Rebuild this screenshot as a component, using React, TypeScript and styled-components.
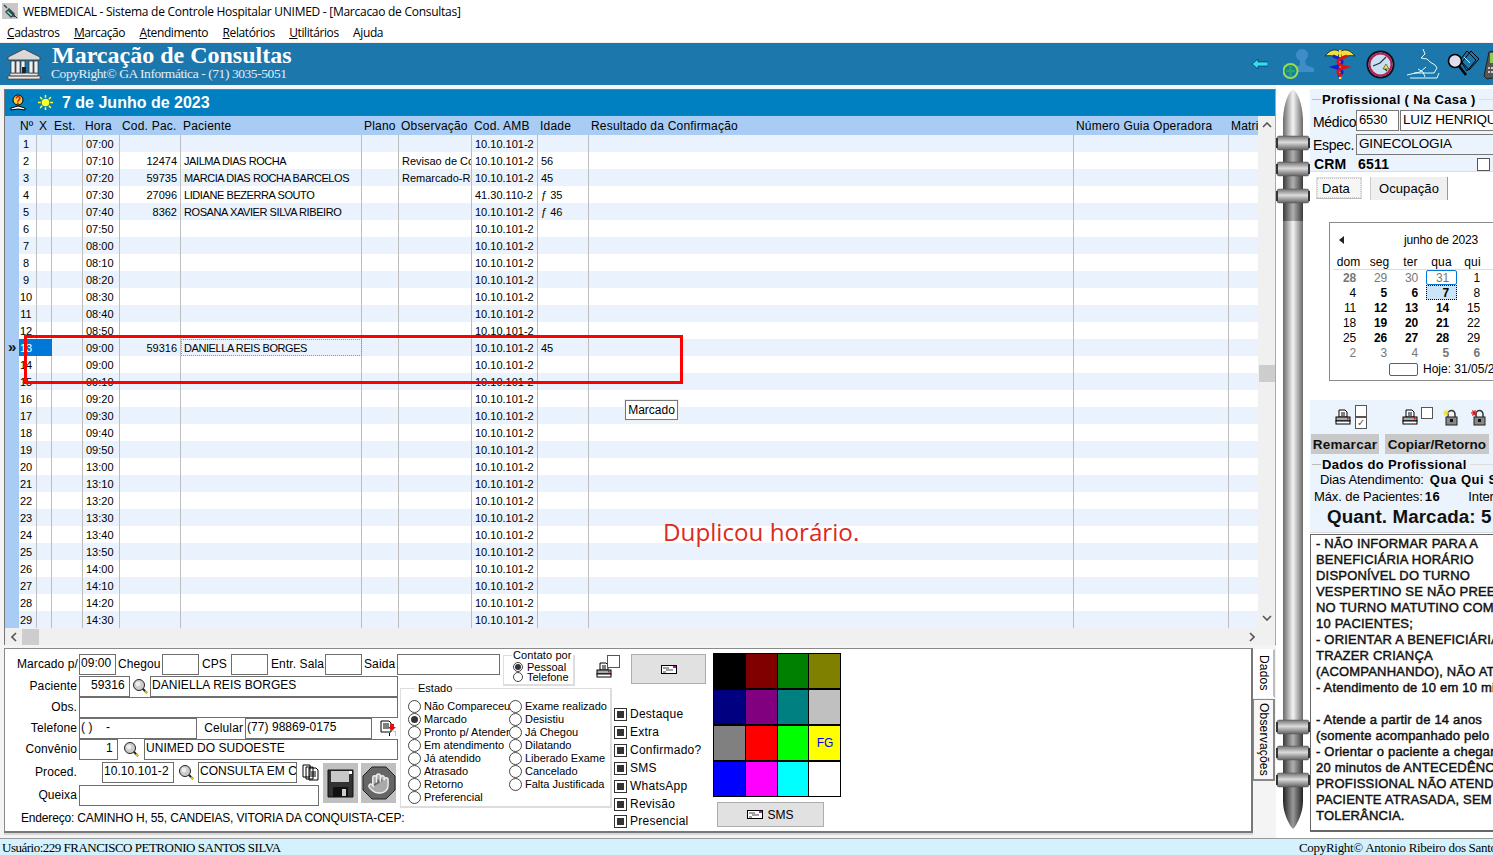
import React from 'react';
import styled, { createGlobalStyle } from 'styled-components';
import { Hand } from 'lucide-react';

const Global = createGlobalStyle`
  html, body { margin: 0; padding: 0; background: #fff; overflow: hidden; }
  * { box-sizing: border-box; }
`;

const UI = `"Liberation Sans", Arial, sans-serif`;
const HEAD = '#a8ccf3';
const LIGHT = '#ebf3fd';

const Root = styled.div`
  position: relative; width: 1493px; height: 855px; overflow: hidden; background: #fff;
  display: flex; flex-direction: column; font-family: ${UI}; font-size: 12px; color: #000;
`;
const TitleBar = styled.div`
  height: 22px; display: flex; align-items: center; gap: 5px; padding-left: 2px;
  font: 12px "Open Sans", sans-serif; letter-spacing: -0.27px; background: #fff; flex: none;
`;
const MenuBar = styled.div`
  height: 21px; display: flex; align-items: center; padding-left: 7px; gap: 14.4px; flex: none;
  font: 12px "Open Sans", sans-serif; letter-spacing: -0.4px; border-bottom: 1px solid #f0f0f0;
`;
const Banner = styled.div`
  height: 42px; background: #1c77ad; flex: none; display: flex; align-items: flex-start; padding-left: 7px; position: relative;
`;
const BannerText = styled.div`
  margin-left: 11px; display: flex; flex-direction: column; font-family: "Liberation Serif", serif; color: #fff;
`;
const BannerTitle = styled.div`font-size: 24px; font-weight: 700; line-height: 25px; white-space: nowrap;`;
const BannerSub = styled.div`font-size: 13.5px; line-height: 12px; color: #e4eef5; white-space: nowrap; letter-spacing: -0.43px; margin-left: -1px;`;
const BannerIcons = styled.div`
  margin-left: auto; display: flex; align-items: center; width: 243px; height: 42px; flex: none;
  svg { flex: none; }
`;
const BI = styled.div<{ $ml: number }>`margin-left: ${p => p.$ml}px; flex: none; display: flex;`;
const Body = styled.div`flex: 1; display: flex; min-height: 0; background: #fff;`;
const LeftCol = styled.div`
  width: 1276px; flex: none; padding: 4px 0 0 4px; display: flex; flex-direction: column; background: #f4f4f4;
`;
const GridPanel = styled.div`
  height: 556px; border-top: 1px solid #777; border-left: 1px solid #777; border-right: 1px solid #aaa; border-bottom: 1px solid #777;
  display: flex; flex-direction: column; flex: none; background: #f0f0f0;
`;
const DateBar = styled.div`
  height: 26px; background: #0080c0; display: flex; align-items: center; color: #fff; font: 700 16px ${UI}; flex: none;
  padding-left: 5px; gap: 8px; border-bottom: 1px solid #666;
`;
const GridWrap = styled.div`display: flex; height: 512px; flex: none;`;
const Table = styled.div`width: 1253px; flex: none; padding-left: 2px; overflow: hidden; background: ${HEAD};`;
const cols = '12px 18px 15px 31px 37px 61px 181px 37px 73px 66px 51px 485px 155px 30px';
const HeadRow = styled.div`
  display: grid; grid-template-columns: ${cols}; height: 19px; background: ${HEAD}; font: 12px/21px ${UI}; letter-spacing: 0.2px;
`;
const HeadCell = styled.div<{ $pad?: number }>`
  padding-left: ${p => p.$pad ?? 2}px; white-space: nowrap; overflow: hidden;
`;
const Row = styled.div<{ $odd: boolean }>`
  display: grid; grid-template-columns: ${cols}; height: 17px; font: 11px/19px ${UI};
  background: ${p => (p.$odd ? '#eaf2fd' : '#fff')};
`;
const Indicator = styled.div`background: ${HEAD}; margin-left: -1px; font: 700 15px/15px ${UI}; padding-left: 2px; color: #111;`;
const Cell = styled.div<{ $right?: boolean; $center?: boolean; $sel?: boolean; $focus?: boolean; $tight?: boolean }>`
  border-right: 1px solid #bdbdbd; white-space: nowrap; overflow: hidden; padding: 0 3px 0 ${p => (p.$center ? 0 : 3)}px;
  text-align: ${p => (p.$right ? 'right' : p.$center ? 'center' : 'left')};
  ${p => p.$sel && 'background:#0078d7;color:#fff;border-right-color:#0078d7;'}
  ${p => p.$focus && 'outline:1px dotted #c98a3a;outline-offset:-1px;'}
  ${p => p.$tight && 'letter-spacing:-0.42px;'}
`;
const VScroll = styled.div`
  width: 17px; flex: none; background: #f0f0f0; display: flex; flex-direction: column; align-items: center; justify-content: space-between;
  position: relative; color: #555; font-size: 9px;
`;
const Thumb = styled.div`width: 16px; height: 17px; background: #cdcdcd;`;
const VSpacer = styled.div<{ $h: number }>`height: ${p => p.$h}px; flex: none;`;
const HScroll = styled.div`height: 17px; display: flex; align-items: center; background: #f0f0f0; padding: 0 20px 0 6px; flex: none;`;
const HThumb = styled.div`width: 17px; height: 16px; background: #cdcdcd; margin-left: 5px; margin-right: auto;`;

const FormArea = styled.div`flex: 1; display: flex; padding-top: 3px; min-height: 0; background: #f4f4f4;`;
const FormBox = styled.div`
  width: 1249px; height: 185px; flex: none; background: #fff; border: 1px solid #8a8a8a; border-right: 2px solid #777; border-bottom: 2px solid #777;
  display: flex; padding: 5px 0 0 12px; box-shadow: 0 2px 0 #d8d8d8;
`;
const VTabs = styled.div`display: flex; flex-direction: column; flex: none; width: 22px; padding-top: 1px;`;
const VTab = styled.div<{ $h: number; $active?: boolean }>`
  height: ${p => p.$h}px; width: 22px; writing-mode: vertical-rl; display: flex; align-items: center; justify-content: center;
  font: 12px ${UI}; background: ${p => (p.$active ? '#fff' : '#f7f7f7')}; letter-spacing: .2px;
  border-right: 2px solid ${p => (p.$active ? '#bbb' : '#888')}; border-bottom: 2px solid ${p => (p.$active ? '#fff' : '#888')};
  border-left: 1px solid ${p => (p.$active ? 'transparent' : '#888')}; border-top: 1px solid ${p => (p.$active ? 'transparent' : '#888')};
  margin-bottom: 1px;
`;
const ColA = styled.div`width: 383px; flex: none; display: flex; flex-direction: column;`;
const FormRow = styled.div<{ $h?: number }>`
  display: flex; align-items: stretch; height: ${p => p.$h ?? 21}px; flex: none; white-space: nowrap;
`;
const Label = styled.div<{ $w: number }>`
  width: ${p => p.$w}px; text-align: right; flex: none; font: 12px/21px ${UI}; letter-spacing: .1px; white-space: nowrap;
`;
const InlineLabel = styled.div<{ $w: number; $ml: number }>`
  width: ${p => p.$w}px; margin-left: ${p => p.$ml}px; flex: none; font: 12px/21px ${UI}; letter-spacing: .1px; white-space: nowrap;
`;
const Field = styled.div<{ $w: number; $ml?: number; $right?: boolean }>`
  width: ${p => p.$w}px; margin-left: ${p => p.$ml ?? 2}px; flex: none; height: 21px; background: #fff;
  border: 1px solid #6e6e6e; font: 12px/17px ${UI}; padding: 0 1px; overflow: hidden; white-space: nowrap;
  text-align: ${p => (p.$right ? 'right' : 'left')}; letter-spacing: 0.05px;
`;
const IconSlot = styled.div<{ $w: number }>`width: ${p => p.$w}px; flex: none; display: flex; align-items: center; justify-content: center;`;
const ProcedZone = styled.div`display: flex; margin-top: 2px; height: 44px; flex: none;`;
const ProcedLeft = styled.div`display: flex; flex-direction: column; gap: 2px; width: 306px; flex: none;`;
const ProcedButtons = styled.div`display: flex; gap: 3px; margin-top: 1px; height: 40px; margin-left: 0;`;
const IconButton = styled.div`width: 35px; height: 40px; background: #c0c0c0; display: flex; align-items: center; justify-content: center; flex: none; position: relative;`;
const Address = styled.div`font: 12px ${UI}; margin: 5px 0 0 4px; white-space: nowrap; letter-spacing: -0.17px;`;

const ColB = styled.div`width: 213px; flex: none; display: flex; flex-direction: column;`;
const TopLine = styled.div`display: flex; height: 29px; flex: none;`;
const ContactBox = styled.fieldset`
  margin: -3px 0 0 103px; width: 71px; height: 35px; padding: 0 0 0 9px; border: 1px solid #ddd; border-width: 1px 2px 2px 1px; font: 11px/10px ${UI}; flex: none;
  legend { padding: 0 1px; margin-left: -1px; line-height: 9px; height: 9px; white-space: nowrap; letter-spacing: 0.1px; }
`;
const ContactRows = styled.div`display: flex; flex-direction: column; margin-top: 2px;`;
const ContactRow = styled.div`display: flex; align-items: center; gap: 4px; height: 10px;`;
const PrinterSlot = styled.div`
  position: relative; margin-left: 21px; margin-top: 1px; width: 24px; height: 23px; display: flex; align-items: flex-end; flex: none;
`;
const SmallBox = styled.div`position: absolute; right: 0; top: 0; width: 13px; height: 13px; background: #fff; border: 1px solid #555;`;
const EstadoBox = styled.fieldset`
  margin: 0; width: 212px; height: 125px; padding: 0 0 0 7px; border: 1px solid #ddd; border-width: 1px 2px 2px 1px;
  font: 11px/13px ${UI}; letter-spacing: 0; display: grid; grid-template-columns: 101px 1fr; flex: none;
  legend { margin-left: 7px; padding: 0 3px; font-size: 11px; line-height: 11px; }
`;
const RadioCol = styled.div`display: flex; flex-direction: column; margin-top: 6px; min-width: 0;`;
const RadioRow = styled.div`display: flex; align-items: center; gap: 3px; height: 13px; white-space: nowrap;`;
const Radio = styled.span<{ $on?: boolean; $size?: number }>`
  width: ${p => p.$size ?? 13}px; height: ${p => p.$size ?? 13}px; border-radius: 50%; border: 1px solid #444; flex: none; background: #fff;
  display: inline-flex; align-items: center; justify-content: center; position: relative;
  &::after { content: ''; width: ${p => (p.$size ? 6 : 7)}px; height: ${p => (p.$size ? 6 : 7)}px; border-radius: 50%; background: ${p => (p.$on ? '#333' : 'transparent')}; }
`;
const ColC = styled.div`width: 99px; flex: none; display: flex; flex-direction: column; margin-left: 1px;`;
const GrayBtn = styled.div<{ $w: number; $h: number; $ml: number }>`
  width: ${p => p.$w}px; height: ${p => p.$h}px; margin-left: ${p => p.$ml}px; background: #e1e1e1; border: 1px solid #adadad; flex: none;
  display: flex; align-items: center; justify-content: center; gap: 4px; font: 12px ${UI};
`;
const Checks = styled.div`display: flex; flex-direction: column; margin-top: 21px;`;
const CheckRow = styled.div`
  display: flex; align-items: center; gap: 3px; height: 18px; font: 12px ${UI}; letter-spacing: .25px; white-space: nowrap;
  &:last-child { margin-top: -1px; }
`;
const CheckBox = styled.span`
  width: 13px; height: 13px; border: 1px solid #333; background: #fff; flex: none; display: flex; align-items: center; justify-content: center;
  &::after { content: ''; width: 7px; height: 7px; background: #333; }
`;
const ColD = styled.div`width: 128px; flex: none; display: flex; flex-direction: column; gap: 5px; margin-top: -1px;`;
const Palette = styled.div`
  display: grid; grid-template-columns: repeat(4, 1fr); grid-auto-rows: 34px; gap: 2px 1px; background: #000; border: 1px solid #000; width: 128px; height: 144px; flex: none;
`;
const Swatch = styled.div<{ $c: string }>`
  background: ${p => p.$c}; color: #00f; font: 12px ${UI}; display: flex; align-items: center; justify-content: center; padding-left: 1px;
`;

const SpineZone = styled.div`width: 34px; flex: none; padding-top: 4px; background: #fff;`;
const Right = styled.div`width: 320px; flex: none; padding-top: 4px; display: flex; flex-direction: column; background: #fff;`;
const ProfBox = styled.div`height: 83px; background: ${LIGHT}; flex: none; display: flex; flex-direction: column; border-bottom: 1px solid #ddd;`;
const GroupTitle = styled.div<{ $h: number }>`
  display: flex; align-items: center; height: ${p => p.$h}px; font: 700 13px ${UI}; letter-spacing: .35px; white-space: nowrap; padding-left: 2px; flex: none;
  &::before { content: ''; width: 9px; height: 1px; background: #bbb; margin-right: 1px; flex: none; }
  &::after { content: ''; flex: 1; height: 1px; background: #ddd; margin-left: 3px; }
`;
const ProfRow = styled.div<{ $h: number }>`display: flex; align-items: center; height: ${p => p.$h}px; flex: none; white-space: nowrap;`;
const ProfLabel = styled.div<{ $pt?: number }>`width: 46px; padding: ${p => p.$pt ?? 0}px 0 0 3px; font: 14px ${UI}; flex: none; letter-spacing: -0.3px;`;
const ProfInput = styled.div<{ $w: number; $bg?: string; $size?: number }>`
  width: ${p => p.$w}px; height: 21px; margin-right: 1px; background: ${p => p.$bg ?? '#fff'}; border: 1px solid #777; font: ${p => p.$size ?? 13.5}px/18px ${UI}; letter-spacing: -0.15px; padding-left: 2px; flex: none; overflow: hidden;
`;
const Crm = styled.div<{ $w?: number; $ml: number }>`font: 700 14px ${UI}; ${p => p.$w && `width:${p.$w}px;`} margin-left: ${p => p.$ml}px; flex: none; letter-spacing: .2px;`;
const Check = styled.div`width: 13px; height: 13px; background: #fff; border: 1px solid #555; flex: none;`;
const TabsRow = styled.div`height: 28px; display: flex; padding: 5px 0 0 6px; flex: none; font: 13px ${UI}; letter-spacing: .1px;`;
const DataTab = styled.div`
  width: 46px; height: 22px; background: #f6f6f6; border: 1px solid #ddd; border-bottom: 1px solid #bbb; display: flex; align-items: center; justify-content: center; padding-right: 6px;
  outline: 1px dotted #ccc; outline-offset: -2px;
`;
const OcuTab = styled.div`
  width: 78px; height: 23px; margin-left: 8px; background: #f0f0f0; border-left: 1px solid #ccc; border-right: 1px solid #999; display: flex; align-items: center; justify-content: center;
`;
const CalZone = styled.div`height: 200px; flex: none; padding: 22px 0 0 19px; background: #fff;`;
const Calendar = styled.div`
  width: 300px; height: 159px; border: 1px solid #8a8a8a; padding: 6px 0 0 3px; font: 12px ${UI};
`;
const CalHead = styled.div`display: flex; align-items: center; height: 26px; padding: 0 0 4px 6px; font-size: 12px; letter-spacing: -0.15px;`;
const CalTitle = styled.div`margin-left: 60px;`;
const CalGrid = styled.div`display: grid; grid-template-columns: repeat(7, 31px); grid-auto-rows: 15px;`;
const DayName = styled.div`grid-row: 1; height: 15px; text-align: center; font-size: 12px; letter-spacing: .1px; border-bottom: 1px solid #ddd;`;
const Day = styled.div<{ $b?: boolean; $g?: boolean; $today?: boolean; $sel?: boolean }>`
  text-align: right; padding-right: 8px; font-size: 12px; line-height: 17px; letter-spacing: -0.2px; overflow: visible;
  font-weight: ${p => (p.$b ? 700 : 400)}; color: ${p => (p.$g ? '#777' : '#000')};
  ${p => p.$today && 'border:1px solid #0078d7;border-radius:2px;padding-right:7px;line-height:15px;'}
  ${p => p.$sel && 'background:#cce4f7;outline:1px dotted #000;outline-offset:-1px;'}
`;
const HojeRow = styled.div`display: flex; align-items: center; gap: 5px; padding-left: 56px; margin-top: 2px; font-size: 12px; white-space: nowrap;`;
const HojeBox = styled.div`width: 29px; height: 13px; border: 1px solid #0078d7; border-radius: 2px;`;
const Tools = styled.div`
  height: 32px; background: ${LIGHT}; flex: none; display: flex; align-items: center; padding: 2px 0 0 25px;
`;
const CheckStack = styled.div`display: flex; flex-direction: column; margin-left: 4px; width: 12px;`;
const StackBox = styled.div`width: 12px; height: 12px; background: #fff; border: 1px solid #555; font: 10px/10px ${UI}; text-align: center; color: #555;`;
const ToolBox = styled.div`width: 12px; height: 12px; background: #fff; border: 1px solid #555; margin: -9px 0 0 3px; flex: none;`;
const Btns = styled.div`display: flex; height: 24px; flex: none; gap: 6px; padding: 2px 0 0 1px; background: ${LIGHT};`;
const BoldBtn = styled.div<{ $w: number; $ls: number }>`
  width: ${p => p.$w}px; height: 20px; background: #c8c8c8; font: 700 13.5px/21px ${UI}; letter-spacing: ${p => p.$ls}px; text-align: center; flex: none; white-space: nowrap; color: #111;
`;
const DadosBox = styled.div`height: 77px; background: ${LIGHT}; flex: none; display: flex; flex-direction: column; border-bottom: 1px solid #ddd;`;
const DadosLine = styled.div<{ $pl: number; $h: number }>`padding-left: ${p => p.$pl}px; height: ${p => p.$h}px; display: flex; align-items: center; font: 13px ${UI}; white-space: nowrap; flex: none; letter-spacing: -0.1px;`;
const B = styled.b<{ $ml?: number }>`font: 700 13px ${UI}; letter-spacing: .55px; margin: 1px 0 0 ${p => p.$ml ?? 2}px;`;
const Inter = styled.span`margin-left: 28px;`;
const Quant = styled.div`font: 700 18.8px ${UI}; padding-left: 17px; line-height: 20px; white-space: nowrap; letter-spacing: .1px; color: #111;`;
const Memo = styled.div`
  flex: none; height: 298px; margin-top: 1px; border: 1px solid #666; border-bottom: 2px solid #666; background: #fff; padding: 1px 0 0 5px; overflow: hidden;
  font: 13px/16px ${UI}; letter-spacing: .2px; white-space: pre; color: #111; -webkit-text-stroke: .45px #111;
`;
const StatusBar = styled.div`
  height: 17px; flex: none; background: #d4f2fd; display: flex; justify-content: space-between; font: 13px/18px "Liberation Serif", serif; padding-left: 2px; white-space: nowrap; border-top: 1px solid #999; overflow: hidden; letter-spacing: -0.5px;
`;
const StatusRight = styled.div`width: 194px; flex: none; overflow: visible; letter-spacing: -0.3px;`;

const RedBox = styled.div`position: absolute; left: 24px; top: 335px; width: 659px; height: 49px; border: 3px solid #f00; pointer-events: none;`;
const Tip = styled.div`position: absolute; left: 625px; top: 400px; width: 53px; height: 20px; background: #fff; border: 1px solid #777; font: 12px/18px ${UI}; text-align: center; box-shadow: 0 0 0 1px #eee;`;
const Note = styled.div`position: absolute; left: 663px; top: 515px; font: 24.2px "Open Sans", sans-serif; color: #dc2a1e; white-space: nowrap;`;
const HandWrap = styled.div`position: relative; width: 34px; height: 34px; display: flex; align-items: center; justify-content: center;`;
const Octagon = styled.svg`position: absolute; left: 0; top: 0;`;
const HandIcon = styled(Hand)`position: relative;`;

/* Icons */
const AppIcon = () => (
  <svg width="16" height="16" viewBox="0 0 16 16"><rect width="16" height="16" fill="#c8c8c8" /><path d="M2 2l3 3M13 14L6 7M4 9l3-3 5 5-1 2-2 1z" stroke="#345" strokeWidth="1.4" fill="#7ea" /><path d="M12 12l3 3" stroke="#333" /></svg>
);
const TempleSvg = styled.svg`margin-top: 5px; flex: none;`;
const Temple = () => (
  <TempleSvg width="34" height="32" viewBox="0 0 34 32">
    <path d="M17 1L33 9v3H1V9z" fill="#d8d8d8" stroke="#444" />
    <path d="M1 28h32v3H1zM3 25h28v3H3z" fill="#e8e8e8" stroke="#444" strokeWidth=".7" />
    {[4, 9, 14, 22, 27].map(x => <rect key={x} x={x} y="13" width="4" height="12" fill="#f0f0f0" stroke="#333" strokeWidth=".7" />)}
    <rect x="15" y="19" width="4" height="6" fill="#222" />
  </TempleSvg>
);
const QuestionBook = () => (
  <svg width="16" height="17" viewBox="0 0 16 17"><path d="M1 14l7-2 7 2v2l-7-1-7 1z" fill="#fff" stroke="#000" /><circle cx="8" cy="6" r="5" fill="#f6d040" stroke="#000" /><text x="8" y="10" fontSize="10" fontWeight="700" textAnchor="middle" fill="#d00" fontFamily="Liberation Sans">?</text></svg>
);
const SunSvg = styled.svg`margin-left: 3px; flex: none;`;
const Sun = () => (
  <SunSvg width="17" height="17" viewBox="0 0 18 18"><circle cx="9" cy="9" r="4" fill="#ffff30" />{[0, 45, 90, 135, 180, 225, 270, 315].map(a => <line key={a} x1="9" y1="1" x2="9" y2="4" stroke="#ffff30" strokeWidth="1.6" transform={`rotate(${a} 9 9)`} />)}</SunSvg>
);
const Mag = ({ s = 17 }: { s?: number }) => (
  <svg width={s} height={s} viewBox="0 0 17 17"><line x1="10" y1="10" x2="15" y2="15" stroke="#222" strokeWidth="2" /><line x1="13" y1="13" x2="15" y2="15" stroke="#dc0" strokeWidth="2" /><circle cx="7" cy="7" r="5.5" fill="#ccc" stroke="#222" /><circle cx="6" cy="6" r="2.4" fill="#eee" /></svg>
);
const Printer = ({ s = 16 }: { s?: number }) => (
  <svg width={s} height={s} viewBox="0 0 16 16"><path d="M4 1h6l2 2v5H4z" fill="#fff" stroke="#000" /><path d="M6 4h4M6 6h4" stroke="#000" /><rect x="1" y="8" width="14" height="4" fill="#aaa" stroke="#000" /><rect x="1" y="12" width="14" height="3" fill="#fff" stroke="#000" /><rect x="12" y="9" width="1.4" height="1.4" fill="#e00" /></svg>
);
const Envelope = () => (
  <svg width="16" height="9" viewBox="0 0 16 9"><rect x=".5" y=".5" width="15" height="8" fill="#fff" stroke="#000" /><path d="M2 3h6M5 5h7M2 7h3" stroke="#444" /><rect x="12" y="1" width="3" height="2" fill="#c0c" /></svg>
);
const Docs = () => (
  <svg width="17" height="17" viewBox="0 0 17 17"><path d="M1 1h7v12H1zM4 3h7v12H4zM7 4h7l2 2v10H7z" fill="#fff" stroke="#000" /><path d="M9 8h5M9 10h5M9 12h5" stroke="#000" /></svg>
);
const DocFlag = () => (
  <svg width="17" height="17" viewBox="0 0 17 17"><path d="M1 1h8l2 2v9H1z" fill="#fff" stroke="#000" /><path d="M3 4h6M3 6h6M3 8h6" stroke="#000" /><path d="M10 4h4v3h2l-4 4-4-4h2z" fill="#e01010" /><path d="M13 11h3v5h-1v-4h-2z" fill="#dd0" /><path d="M9 13h1v3H9z" fill="#000" /></svg>
);
const Floppy = () => (
  <svg width="27" height="29" viewBox="0 0 27 29"><path d="M1 1h25v27H1z" fill="#333" stroke="#111" /><rect x="4" y="2" width="18" height="11" fill="#c8c8c8" /><rect x="22" y="2" width="3" height="3" fill="#fff" /><rect x="6" y="18" width="15" height="10" fill="#111" /><rect x="15" y="20" width="4" height="7" fill="#ccc" /></svg>
);
const StopHand = () => (
  <HandWrap>
    <Octagon width="34" height="34" viewBox="0 0 34 34"><path d="M10 1h14l9 9v14l-9 9H10l-9-9V10z" fill="#666" stroke="#222" /></Octagon>
    <HandIcon size={23} color="#eee" fill="#aaa" strokeWidth={1.5} />
  </HandWrap>
);
const LockIcon = ({ c }: { c: string }) => (
  <svg width="16" height="17" viewBox="0 0 16 17"><path d="M5 8V5a3.5 3.5 0 017 0v3" fill="none" stroke="#333" strokeWidth="1.5" /><rect x="3" y="8" width="11" height="8" fill="#888" stroke="#222" /><rect x="7" y="10" width="3" height="3" fill="#111" />{[0, 60, 120].map(a => <line key={a} x1="0" y1="4" x2="6" y2="4" stroke={c} strokeWidth="1.2" transform={`rotate(${a} 3 4)`} />)}</svg>
);
const ArrowIcon = () => (
  <svg width="16" height="10" viewBox="0 0 16 10"><path d="M0 5l6-5v3h10v4H6v3z" fill="#30e0f0" stroke="#024" strokeWidth=".6" /></svg>
);
const AddUser = () => (
  <svg width="32" height="32" viewBox="0 0 32 32"><circle cx="19" cy="7" r="6" fill="#3f8cc8" /><path d="M17 12h5l1 5 8 3v4H10v-4l7-3z" fill="#3f8cc8" /><circle cx="7.5" cy="23" r="7" fill="#1c77ad" stroke="#9d4" strokeWidth="2" /><path d="M7.5 18v10M3 23h9" stroke="#2a6" strokeWidth="2.4" /></svg>
);
const Caduceus = () => (
  <svg width="32" height="33" viewBox="0 0 32 33"><path d="M16 4C11 0 6 2 1 8c5-1 9 0 13 1zM16 4c5-4 10-2 15 4-5-1-9 0-13 1z" fill="#f0e040" stroke="#111" strokeWidth=".7" /><rect x="15" y="2" width="2.4" height="29" fill="#f0e040" /><path d="M9 8c12 4 12 8 1 11 10 3 10 6 4 9" fill="none" stroke="#1020d0" strokeWidth="3" /><path d="M23 8c-12 4-12 8-1 11-10 3-10 6-4 9" fill="none" stroke="#e01010" strokeWidth="3" /></svg>
);
const Clock = () => (
  <svg width="29" height="29" viewBox="0 0 29 29"><circle cx="14.5" cy="14.5" r="13" fill="#c8e0f0" stroke="#111" strokeWidth="2" /><circle cx="14.5" cy="14.5" r="11" fill="none" stroke="#b02060" strokeWidth="2" /><path d="M7 16l7-3 6-6M18 18l3 3" stroke="#234" strokeWidth="1.2" fill="none" /><path d="M17 19l3-5 3 5z" fill="#f0e040" stroke="#111" strokeWidth=".5" /></svg>
);
const MapIcon = () => (
  <svg width="34" height="32" viewBox="0 0 34 32" fill="none" stroke="#dff" strokeWidth="1"><path d="M17 1l2 5-4 4 6 1 3 3 5 3 2 3-3 5H8" /><path d="M1 27l13-3 6-5M4 30h27l2-5M12 21l5 3 2 5" /></svg>
);
const Cards = () => (
  <svg width="32" height="29" viewBox="0 0 32 29"><path d="M15 12L24 1l8 8-10 11zM13 10L20 1l9 9-9 11z" fill="#1c77ad" stroke="#000" /><path d="M17 7l6 6" stroke="#eee" /><circle cx="8" cy="11" r="6.5" fill="#dde" stroke="#000" strokeWidth="1.6" /><line x1="12" y1="16" x2="19" y2="25" stroke="#000" strokeWidth="2.6" /></svg>
);
const Phone = () => (
  <svg width="24" height="32" viewBox="0 0 24 32"><path d="M6 4l14-3 4 2v24l-20 4-3-3z" fill="#555" stroke="#222" /><rect x="7" y="5" width="17" height="10" fill="#8fce5a" /><path d="M5 20h19M5 24h19" stroke="#ccc" strokeWidth="2" strokeDasharray="2 1" /></svg>
);
const SpineSvg = styled.svg`display: block;`;
const Spine = () => {
  const flange = (y: number) => (
    <g key={y}>
      <rect x="1" y={y} width="32" height="14" rx="2" fill="url(#sf)" stroke="#555" strokeWidth=".5" />
      <rect x="0" y={y + 2} width="2" height="10" fill="#333" />
      <rect x="32" y={y + 2} width="2" height="10" fill="#333" />
    </g>
  );
  return (
    <SpineSvg width="34" height="745" viewBox="0 0 34 745">
      <defs>
        <linearGradient id="sl"><stop offset="0" stopColor="#6a6a6a" /><stop offset=".5" stopColor="#f4f4f4" /><stop offset="1" stopColor="#6a6a6a" /></linearGradient>
        <linearGradient id="sd"><stop offset="0" stopColor="#3a3a3a" /><stop offset=".5" stopColor="#b0b0b0" /><stop offset="1" stopColor="#3a3a3a" /></linearGradient>
        <linearGradient id="sk"><stop offset="0" stopColor="#222" /><stop offset=".5" stopColor="#999" /><stop offset="1" stopColor="#222" /></linearGradient>
        <linearGradient id="sf" x1="0" y1="0" x2="0" y2="1"><stop offset="0" stopColor="#707070" /><stop offset=".45" stopColor="#dcdcdc" /><stop offset="1" stopColor="#606060" /></linearGradient>
      </defs>
      <path d="M7 30C8 12 13 3 17 0c4 3 9 12 10 30v26H7z" fill="url(#sl)" />
      <rect x="7" y="56" width="20" height="76" fill="url(#sd)" />
      <rect x="7" y="132" width="20" height="505" fill="url(#sl)" />
      <rect x="7" y="637" width="20" height="60" fill="url(#sd)" />
      <path d="M7 697h20v15c0 12-6 24-10 28-4-4-10-16-10-28z" fill="url(#sk)" />
      {[47, 73, 100, 631, 657, 684].map(flange)}
    </SpineSvg>
  );
};

/* Data */
const times = ['07:00', '07:10', '07:20', '07:30', '07:40', '07:50', '08:00', '08:10', '08:20', '08:30', '08:40', '08:50', '09:00', '09:00', '09:10', '09:20', '09:30', '09:40', '09:50', '13:00', '13:10', '13:20', '13:30', '13:40', '13:50', '14:00', '14:10', '14:20', '14:30'];
const patients: Record<number, { cod: string; nome: string; obs?: string; idade: string; amb?: string }> = {
  2: { cod: '12474', nome: 'JAILMA DIAS ROCHA', obs: 'Revisao de Consulta', idade: '56' },
  3: { cod: '59735', nome: 'MARCIA DIAS ROCHA BARCELOS', obs: 'Remarcado-Reagendado', idade: '45' },
  4: { cod: '27096', nome: 'LIDIANE BEZERRA SOUTO', idade: 'ƒ 35', amb: '41.30.110-2' },
  5: { cod: '8362', nome: 'ROSANA XAVIER SILVA RIBEIRO', idade: 'ƒ 46' },
  13: { cod: '59316', nome: 'DANIELLA REIS BORGES', idade: '45' },
};
const heads: [string, number?][] = [['', 0], ['Nº', 1], ['X'], ['Est.'], ['Hora'], ['Cod. Pac.'], ['Paciente'], ['Plano'], ['Observação'], ['Cod. AMB'], ['Idade'], ['Resultado da Confirmação'], ['Número Guia Operadora'], ['Matricula']];
const estadoA = ['Não Compareceu', 'Marcado', 'Pronto p/ Atender', 'Em atendimento', 'Já atendido', 'Atrasado', 'Retorno', 'Preferencial'];
const estadoB = ['Exame realizado', 'Desistiu', 'Já Chegou', 'Dilatando', 'Liberado Exame', 'Cancelado', 'Falta Justificada'];
const checks = ['Destaque', 'Extra', 'Confirmado?', 'SMS', 'WhatsApp', 'Revisão', 'Presencial'];
const palette = ['#000000', '#800000', '#008000', '#808000', '#000080', '#800080', '#008080', '#c0c0c0', '#808080', '#ff0000', '#00ff00', '#ffff00', '#0000ff', '#ff00ff', '#00ffff', '#ffffff'];
const dayNames = ['dom', 'seg', 'ter', 'qua', 'qui', 'sex', 'sáb'];
type D = { t: string; b?: boolean; g?: boolean; today?: boolean; sel?: boolean };
const days: D[] = [
  { t: '28', b: true, g: true }, { t: '29', g: true }, { t: '30', g: true }, { t: '31', g: true, today: true }, { t: '1' }, { t: '2' }, { t: '3' },
  { t: '4' }, { t: '5', b: true }, { t: '6', b: true }, { t: '7', b: true, sel: true }, { t: '8' }, { t: '9' }, { t: '10' },
  { t: '11' }, { t: '12', b: true }, { t: '13', b: true }, { t: '14', b: true }, { t: '15' }, { t: '16' }, { t: '17' },
  { t: '18' }, { t: '19', b: true }, { t: '20', b: true }, { t: '21', b: true }, { t: '22' }, { t: '23' }, { t: '24' },
  { t: '25' }, { t: '26', b: true }, { t: '27', b: true }, { t: '28', b: true }, { t: '29' }, { t: '30' }, { t: '1', g: true },
  { t: '2', g: true }, { t: '3', g: true }, { t: '4', g: true }, { t: '5', g: true, b: true }, { t: '6', g: true, b: true }, { t: '7', g: true }, { t: '8', g: true },
];
const memo = `- NÃO INFORMAR PARA A
BENEFICIÁRIA HORÁRIO
DISPONÍVEL DO TURNO
VESPERTINO SE NÃO PREENCHER
NO TURNO MATUTINO COM
10 PACIENTES;
- ORIENTAR A BENEFICIÁRIA
TRAZER CRIANÇA
(ACOMPANHANDO), NÃO ATENDE
- Atendimento de 10 em 10 min

- Atende a partir de 14 anos
(somente acompanhado pelo
- Orientar o paciente a chegar
20 minutos de ANTECEDÊNCIA
PROFISSIONAL NÃO ATENDE
PACIENTE ATRASADA, SEM
TOLERÂNCIA.`;

export default function App() {
  return (
    <Root>
      <Global />
      <TitleBar><AppIcon />WEBMEDICAL - Sistema de Controle Hospitalar UNIMED - [Marcacao de Consultas]</TitleBar>
      <MenuBar>
        <span><u>C</u>adastros</span><span><u>M</u>arcação</span><span><u>A</u>tendimento</span><span><u>R</u>elatórios</span><span><u>U</u>tilitários</span><span>Ajuda</span>
      </MenuBar>
      <Banner>
        <Temple />
        <BannerText>
          <BannerTitle>Marcação de Consultas</BannerTitle>
          <BannerSub>CopyRight© GA Informática - (71) 3035-5051</BannerSub>
        </BannerText>
        <BannerIcons>
          <BI $ml={2}><ArrowIcon /></BI>
          <BI $ml={15}><AddUser /></BI>
          <BI $ml={9}><Caduceus /></BI>
          <BI $ml={10}><Clock /></BI>
          <BI $ml={11}><MapIcon /></BI>
          <BI $ml={7}><Cards /></BI>
          <BI $ml={4}><Phone /></BI>
        </BannerIcons>
      </Banner>
      <Body>
        <LeftCol>
          <GridPanel>
            <DateBar><QuestionBook /><Sun />7 de Junho de 2023</DateBar>
            <GridWrap>
              <Table>
                <HeadRow>{heads.map(([h, p], i) => <HeadCell key={i} $pad={p}>{h}</HeadCell>)}</HeadRow>
                {times.map((t, i) => {
                  const n = i + 1;
                  const p = patients[n];
                  return (
                    <Row key={n} $odd={n % 2 === 1}>
                      <Indicator>{n === 13 ? '»' : ''}</Indicator>
                      <Cell $center $sel={n === 13}>{n}</Cell>
                      <Cell $sel={n === 13} />
                      <Cell />
                      <Cell>{t}</Cell>
                      <Cell $right>{p?.cod}</Cell>
                      <Cell $focus={n === 13} $tight>{p?.nome}</Cell>
                      <Cell />
                      <Cell>{p?.obs}</Cell>
                      <Cell>{p?.amb ?? '10.10.101-2'}</Cell>
                      <Cell>{p?.idade}</Cell>
                      <Cell />
                      <Cell />
                      <Cell />
                    </Row>
                  );
                })}
              </Table>
              <VScroll>
                <VSpacer $h={4} />
                <svg width="10" height="6" viewBox="0 0 10 6"><path d="M1 5l4-4 4 4" fill="none" stroke="#555" strokeWidth="1.6" /></svg>
                <VSpacer $h={233} />
                <Thumb />
                <VSpacer $h={229} />
                <svg width="10" height="6" viewBox="0 0 10 6"><path d="M1 1l4 4 4-4" fill="none" stroke="#555" strokeWidth="1.6" /></svg>
                <VSpacer $h={5} />
              </VScroll>
            </GridWrap>
            <HScroll>
              <svg width="6" height="10" viewBox="0 0 6 10"><path d="M5 1L1 5l4 4" fill="none" stroke="#555" strokeWidth="1.6" /></svg>
              <HThumb />
              <svg width="6" height="10" viewBox="0 0 6 10"><path d="M1 1l4 4-4 4" fill="none" stroke="#555" strokeWidth="1.6" /></svg>
            </HScroll>
          </GridPanel>
          <FormArea>
            <FormBox>
              <ColA>
                <FormRow $h={22}>
                  <Label $w={60}>Marcado p/</Label><Field $w={37}>09:00</Field>
                  <InlineLabel $w={43} $ml={2}>Chegou</InlineLabel><Field $w={37} $ml={1} />
                  <InlineLabel $w={26} $ml={3}>CPS</InlineLabel><Field $w={37} $ml={3} />
                  <InlineLabel $w={52} $ml={3}>Entr. Sala</InlineLabel><Field $w={37} $ml={2} />
                  <InlineLabel $w={32} $ml={2}>Saida</InlineLabel><Field $w={103} $ml={1} />
                </FormRow>
                <FormRow>
                  <Label $w={60}>Paciente</Label><Field $w={51} $right>59316&nbsp;</Field>
                  <IconSlot $w={20}><Mag /></IconSlot><Field $w={248} $ml={0}>DANIELLA REIS BORGES</Field>
                </FormRow>
                <FormRow>
                  <Label $w={60}>Obs.</Label><Field $w={319} />
                </FormRow>
                <FormRow>
                  <Label $w={60}>Telefone</Label><Field $w={118}>( )&nbsp;&nbsp;&nbsp;&nbsp;-</Field>
                  <Label $w={46}>Celular</Label><Field $w={127}>(77) 98869-0175</Field>
                  <IconSlot $w={32}><DocFlag /></IconSlot>
                </FormRow>
                <FormRow>
                  <Label $w={60}>Convênio</Label><Field $w={39} $right>1&nbsp;</Field>
                  <IconSlot $w={26}><Mag /></IconSlot><Field $w={254} $ml={0}>UNIMED DO SUDOESTE</Field>
                </FormRow>
                <ProcedZone>
                  <ProcedLeft>
                    <FormRow>
                      <Label $w={60}>Proced.</Label><Field $w={72} $ml={25}>10.10.101-2</Field>
                      <IconSlot $w={24}><Mag /></IconSlot><Field $w={99} $ml={0}>CONSULTA EM C</Field>
                      <IconSlot $w={26}><Docs /></IconSlot>
                    </FormRow>
                    <FormRow>
                      <Label $w={60}>Queixa</Label><Field $w={240} />
                    </FormRow>
                  </ProcedLeft>
                  <ProcedButtons>
                    <IconButton><Floppy /></IconButton>
                    <IconButton><StopHand /></IconButton>
                  </ProcedButtons>
                </ProcedZone>
                <Address>Endereço: CAMINHO H, 55, CANDEIAS, VITORIA DA CONQUISTA-CEP:</Address>
              </ColA>
              <ColB>
                <TopLine>
                  <ContactBox>
                    <legend>Contato por</legend>
                    <ContactRows>
                      <ContactRow><Radio $on $size={10} />Pessoal</ContactRow>
                      <ContactRow><Radio $size={10} />Telefone</ContactRow>
                    </ContactRows>
                  </ContactBox>
                  <PrinterSlot><Printer /><SmallBox /></PrinterSlot>
                </TopLine>
                <EstadoBox>
                  <legend>Estado</legend>
                  <RadioCol>{estadoA.map(e => <RadioRow key={e}><Radio $on={e === 'Marcado'} />{e}</RadioRow>)}</RadioCol>
                  <RadioCol>{estadoB.map(e => <RadioRow key={e}><Radio />{e}</RadioRow>)}</RadioCol>
                </EstadoBox>
              </ColB>
              <ColC>
                <GrayBtn $w={75} $h={30} $ml={17}><Envelope /></GrayBtn>
                <Checks>{checks.map(c => <CheckRow key={c}><CheckBox />{c}</CheckRow>)}</Checks>
              </ColC>
              <ColD>
                <Palette>{palette.map((c, i) => <Swatch key={i} $c={c}>{c === '#ffff00' ? 'FG' : ''}</Swatch>)}</Palette>
                <GrayBtn $w={107} $h={25} $ml={4}><Envelope />SMS</GrayBtn>
              </ColD>
            </FormBox>
            <VTabs>
              <VTab $h={49} $active>Dados</VTab>
              <VTab $h={82}>Observações</VTab>
            </VTabs>
          </FormArea>
        </LeftCol>
        <SpineZone><Spine /></SpineZone>
        <Right>
          <ProfBox>
            <GroupTitle $h={20}>Profissional ( Na Casa )</GroupTitle>
            <ProfRow $h={22}>
              <ProfLabel $pt={4}>Médico</ProfLabel>
              <ProfInput $w={43} $size={13}>6530</ProfInput>
              <ProfInput $w={200}>LUIZ HENRIQUE</ProfInput>
            </ProfRow>
            <ProfRow $h={27}>
              <ProfLabel>Espec.</ProfLabel>
              <ProfInput $w={240} $bg={LIGHT}>GINECOLOGIA</ProfInput>
            </ProfRow>
            <ProfRow $h={12}>
              <ProfLabel><Crm $ml={1}>CRM</Crm></ProfLabel>
              <Crm $w={119} $ml={2}>6511</Crm>
              <Check />
            </ProfRow>
          </ProfBox>
          <TabsRow><DataTab>Data</DataTab><OcuTab>Ocupação</OcuTab></TabsRow>
          <CalZone>
            <Calendar>
              <CalHead>
                <svg width="5" height="8" viewBox="0 0 5 8"><path d="M5 0L0 4l5 4z" fill="#222" /></svg>
                <CalTitle>junho de 2023</CalTitle>
              </CalHead>
              <CalGrid>
                {dayNames.map(d => <DayName key={d}>{d}</DayName>)}
                {days.map((d, i) => <Day key={i} $b={d.b} $g={d.g} $today={d.today} $sel={d.sel}>{d.t}</Day>)}
              </CalGrid>
              <HojeRow><HojeBox />Hoje: 31/05/2023</HojeRow>
            </Calendar>
          </CalZone>
          <Tools>
            <Printer />
            <CheckStack><StackBox /><StackBox>✓</StackBox></CheckStack>
            <IconSlot $w={35} />
            <Printer />
            <ToolBox />
            <IconSlot $w={10} />
            <LockIcon c="#f0e020" />
            <IconSlot $w={12} />
            <LockIcon c="#e01010" />
          </Tools>
          <Btns><BoldBtn $w={68} $ls={.3}>Remarcar</BoldBtn><BoldBtn $w={104} $ls={0}>Copiar/Retorno</BoldBtn></Btns>
          <DadosBox>
            <GroupTitle $h={17}>Dados do Profissional</GroupTitle>
            <DadosLine $pl={10} $h={12}>Dias Atendimento:<B $ml={6}>Qua Qui Sex</B></DadosLine>
            <DadosLine $pl={4} $h={22}>Máx. de Pacientes:<B>16</B><Inter>Intervalo</Inter></DadosLine>
            <Quant>Quant. Marcada: 5</Quant>
          </DadosBox>
          <Memo>{memo}</Memo>
        </Right>
      </Body>
      <StatusBar>
        <div>Usuário:229 FRANCISCO PETRONIO SANTOS SILVA</div>
        <StatusRight>CopyRight© Antonio Ribeiro dos Santos</StatusRight>
      </StatusBar>
      <RedBox />
      <Tip>Marcado</Tip>
      <Note>Duplicou horário.</Note>
    </Root>
  );
}
